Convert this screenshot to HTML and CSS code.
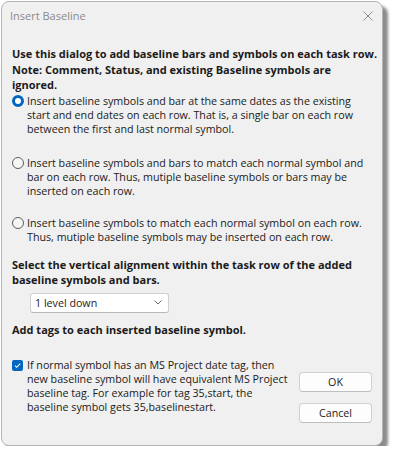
FILE: index.html
```html
<!DOCTYPE html>
<html>
<head>
<meta charset="utf-8">
<link rel="stylesheet" href="styles.css">
</head>
<body>
<div class="window">
  <div class="titlebar">
    <span class="title">Insert Baseline</span>
    <svg class="close" width="10" height="10" viewBox="0 0 10 10"><path d="M0.5 0.5L9.5 9.5M9.5 0.5L0.5 9.5" stroke="#8a8a8a" stroke-width="1" fill="none"/></svg>
  </div>
  <div class="content">
    <p class="bold intro">Use this dialog to add baseline bars and symbols on each task row.<br>Note: Comment, Status, and existing Baseline symbols are<br>ignored.</p>

    <div class="option first">
      <span class="radio checked"></span>
      <p class="text">Insert baseline symbols and bar at the same dates as the existing<br>start and end dates on each row. That is, a single bar on each row<br>between the first and last normal symbol.</p>
    </div>
    <div class="option second">
      <span class="radio"></span>
      <p class="text">Insert baseline symbols and bars to match each normal symbol and<br>bar on each row. Thus, mutiple baseline symbols or bars may be<br>inserted on each row.</p>
    </div>
    <div class="option third">
      <span class="radio"></span>
      <p class="text">Insert baseline symbols to match each normal symbol on each row.<br>Thus, mutiple baseline symbols may be inserted on each row.</p>
    </div>

    <p class="bold select-label">Select the vertical alignment within the task row of the added<br>baseline symbols and bars.</p>

    <div class="dropdown">
      <span>1 level down</span>
      <svg width="8" height="5" viewBox="0 0 8 5"><path d="M0.5 0.5L4 4L7.5 0.5" stroke="#6a6a6a" stroke-width="1" fill="none"/></svg>
    </div>

    <p class="bold tags-label">Add tags to each inserted baseline symbol.</p>

    <div class="bottom">
      <div class="check-row">
        <span class="checkbox">
          <svg width="11" height="11" viewBox="0 0 11 11"><path d="M3 5.7L4.7 7.3L8.2 3.6" stroke="#fff" stroke-width="1.1" fill="none"/></svg>
        </span>
        <p class="text">If normal symbol has an MS Project date tag, then<br>new baseline symbol will have equivalent MS Project<br>baseline tag. For example for tag 35,start, the<br>baseline symbol gets 35,baselinestart.</p>
      </div>
      <div class="buttons">
        <button class="btn">OK</button>
        <button class="btn">Cancel</button>
      </div>
    </div>
  </div>
</div>
</body>
</html>
```

FILE: styles.css
```css
html, body {
  margin: 0;
  padding: 0;
  background: #ffffff;
}
body {
  font-family: "Open Sans", "Noto Sans", sans-serif;
  color: #1b1b1b;
}
p { margin: 0; }

.window {
  margin: 1px 0 0 1px;
  width: 382px;
  height: 445px;
  box-sizing: border-box;
  border: 1px solid #b4b4b4;
  border-radius: 8px;
  background: #f0f0f0;
  box-shadow: 5px 5px 3px rgba(0, 0, 0, 0.45);
  display: flex;
  flex-direction: column;
}

.titlebar {
  height: 27px;
  display: flex;
  align-items: center;
  justify-content: space-between;
  padding: 0 9px 0 8px;
  flex-shrink: 0;
}
.title {
  font-size: 11px;
  color: #8a8a8a;
}
.close { display: block; }

.content {
  padding: 17px 10px 0 10px;
}

.text, .bold {
  white-space: nowrap;
}
.bold {
  font-weight: 700;
  font-size: 11px;
  line-height: 15.5px;
}
.text {
  font-size: 10.7px;
  line-height: 14px;
}

.option {
  display: flex;
  align-items: flex-start;
  gap: 3px;
}
.option.first { margin-top: 1px; }
.option.second { margin-top: 20px; }
.option.third { margin-top: 18px; }

.radio {
  width: 12px;
  height: 12px;
  box-sizing: border-box;
  border-radius: 50%;
  border: 1px solid #5c5c5c;
  background: #f6f6f6;
  margin-top: 1px;
  flex-shrink: 0;
}
.radio.checked {
  border: 3.5px solid #0067c0;
  background: #ffffff;
}

.select-label { margin-top: 13px; }

.dropdown {
  margin: 5px 0 0 18px;
  width: 139px;
  height: 20px;
  box-sizing: border-box;
  background: #ffffff;
  border: 1px solid #cfcfcf;
  border-bottom-color: #b8b8b8;
  border-radius: 3px;
  display: flex;
  align-items: center;
  justify-content: space-between;
  padding: 0 6px 0 4px;
  font-size: 10.7px;
}

.tags-label { margin-top: 9px; }

.bottom {
  margin-top: 21px;
  display: flex;
  justify-content: space-between;
}
.check-row {
  display: flex;
  align-items: flex-start;
  gap: 4px;
}
.checkbox {
  width: 11px;
  height: 11px;
  border-radius: 2px;
  background: #0067c0;
  margin-top: 2px;
  flex-shrink: 0;
}
.checkbox svg { display: block; }

.buttons {
  display: flex;
  flex-direction: column;
  gap: 11px;
  margin-top: 14px;
}
.btn {
  width: 73px;
  height: 20px;
  box-sizing: border-box;
  background: #fdfdfd;
  border: 1px solid #d0d0d0;
  border-bottom-color: #bdbdbd;
  border-radius: 4px;
  font-family: "Open Sans", "Noto Sans", sans-serif;
  font-size: 10.7px;
  color: #1b1b1b;
  padding: 0;
}
```
